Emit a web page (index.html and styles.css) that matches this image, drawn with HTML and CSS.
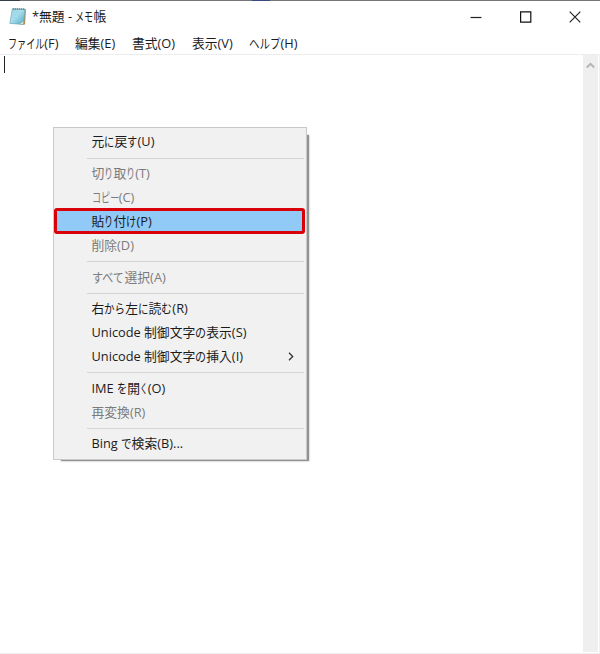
FILE: index.html
```html
<!DOCTYPE html>
<html lang="ja">
<head>
<meta charset="utf-8">
<title>無題 - メモ帳</title>
<link rel="stylesheet" href="styles.css">
</head>
<body>
<div class="window">
  <div class="backdrop"></div>
  <header class="titlebar">
    <svg class="app-icon" width="18" height="19" viewBox="0 0 18 19">
      <defs><linearGradient id="pad" x1="0" y1="0" x2="1" y2="1"><stop offset="0" stop-color="#9fd5e3"/><stop offset=".45" stop-color="#a9e0ee"/><stop offset="1" stop-color="#45a5c2"/></linearGradient></defs>
      <path d="M4.2 1.8 17 2.3 16 17.6 12 17.8z" fill="#a58d68"/>
      <path d="M3.3 1.8 16 2.2 14.3 17.4.8 16.4z" fill="url(#pad)" stroke="#77a9b5" stroke-width=".7"/>
      <path d="M4 5.2 14.8 5.7M3.6 7.8 14.5 8.3M3.2 10.4 14.2 10.9M2.8 13 13.8 13.5" stroke="#8fcddd" stroke-width=".5"/>
      <path d="M3.8 2.2H16" stroke="#5b7b80" stroke-width="1.8" stroke-dasharray="1 1"/>
      <path d="m11 17 3.4-2.7-.3 3z" fill="#e7e0bd"/>
    </svg>
    <span class="title">*無題 - <span class="k n2 s70">メモ</span>帳</span>
    <div class="controls">
      <svg width="12" height="12" viewBox="0 0 12 12"><path d="M.5 6.5h11" stroke="#222" stroke-width="1.2"/></svg>
      <svg width="12" height="12" viewBox="0 0 12 12"><path d="M.6.9h10.2v10.2H.6z" fill="none" stroke="#111" stroke-width="1.2"/></svg>
      <svg width="12" height="12" viewBox="0 0 12 12"><path d="m.7.7 10.6 10.6M11.3.7.7 11.3" stroke="#222" stroke-width="1.2"/></svg>
    </div>
  </header>
  <nav class="menubar">
    <span class="m1"><span class="k n4 s70">ファイル</span>(F)</span>
    <span class="m2">編集(E)</span>
    <span class="m3">書式(O)</span>
    <span class="m4">表示(V)</span>
    <span><span class="k n3 s80">ヘルプ</span>(H)</span>
  </nav>
  <main class="editor">
    <div class="page"><div class="caret"></div></div>
    <div class="scrollbar"><svg width="9" height="7" viewBox="0 0 9 7"><path d="m.8 5.5 3.7-3.7 3.7 3.7" fill="none" stroke="#b5b5b5" stroke-width="2"/></svg></div>
  </main>
  <div class="shadow"></div>
  <div class="context-menu">
    <div class="item">元<span class="k n1 s78">に</span>戻<span class="k n1 s78">す</span>(U)</div>
    <hr>
    <div class="item off">切<span class="k n1 s70">り</span>取<span class="k n1 s70">り</span>(T)</div>
    <div class="item off"><span class="k n3 s70">コピー</span>(C)</div>
    <div class="item active">貼<span class="k n1 s70">り</span>付<span class="k n1 s78">け</span>(P)</div>
    <div class="item off">削除(D)</div>
    <hr>
    <div class="item off"><span class="k n3 s85">すべて</span>選択(A)</div>
    <hr>
    <div class="item">右<span class="k n2 s80">から</span>左<span class="k n1 s80">に</span>読<span class="k n1 s85">む</span>(R)</div>
    <div class="item">Unicode 制御文字<span class="k n1 s85">の</span>表示(S)</div>
    <div class="item">Unicode 制御文字<span class="k n1 s85">の</span>挿入(I)<svg class="arrow" width="6" height="9" viewBox="0 0 6 9"><path d="m1 .8 3.7 3.7L1 8.2" fill="none" stroke="#333" stroke-width="1.3"/></svg></div>
    <hr>
    <div class="item">IME <span class="k n1 s78">を</span>開<span class="k n1 s60">く</span>(O)</div>
    <div class="item off">再変換(R)</div>
    <hr>
    <div class="item">Bing <span class="k n1 s80">で</span>検索(B)...</div>
  </div>
</div>
</body>
</html>
```
FILE: styles.css
```css
* { box-sizing: border-box; }
body {
  margin: 0;
  width: 600px;
  height: 654px;
  overflow: hidden;
  background: #fff;
  color: #1b1b1b;
  font: 12.8px/22px "Open Sans", "Noto Sans CJK JP", sans-serif;
  white-space: nowrap;
}
.window {
  position: relative;
  display: flex;
  flex-direction: column;
  height: 654px;
}
.backdrop {
  height: 1px;
  background: linear-gradient(90deg, #343e49 0 20px, #77777a 20px 252px, #364a80 252px 270px, #77777a 270px);
}
.titlebar {
  display: flex;
  align-items: center;
  height: 31px;
  padding: 0 19px 0 9px;
}
.app-icon { margin-right: 5px; }
.title { flex: 1; padding-bottom: 1px; }
.controls { display: flex; gap: 37.5px; }
.controls svg { display: block; }
.menubar {
  display: flex;
  height: 22px;
  padding-left: 8px;
}
.m1 { width: 67px; }
.m2 { width: 57px; }
.m3 { width: 60px; }
.m4 { width: 57px; }

/* Narrow kana, set beside full-width kanji */
.k {
  display: inline-block;
  width: calc(var(--n) * 12.8px * var(--s));
  transform: scaleX(var(--s));
  transform-origin: 0 50%;
}
.n1 { --n: 1; }
.n2 { --n: 2; }
.n3 { --n: 3; }
.n4 { --n: 4; }
.s60 { --s: .6; }
.s70 { --s: .71; }
.s78 { --s: .8; }
.s80 { --s: .82; }
.s85 { --s: .86; }

.editor {
  display: flex;
  flex: 1;
  border-top: 1px solid #ededed;
  border-right: 1px solid #f0f0f0;
  border-bottom: 1px solid #ededed;
}
.page { flex: 1; padding: 1px 0 0 4px; }
.caret { width: 1px; height: 17px; background: #222; }
.scrollbar {
  display: flex;
  justify-content: center;
  width: 15px;
  margin: 0 1px 1px 0;
  padding-top: 7px;
  background: #efefef;
}
.shadow {
  position: absolute;
  left: 61px;
  top: 135px;
  width: 248px;
  height: 326px;
  background: #929292;
  box-shadow: 0 0 2px #aaa;
}
.context-menu {
  position: absolute;
  left: 53px;
  top: 127px;
  width: 254px;
  height: 333px;
  padding: 2px 1px;
  border: 1px solid #c9c9c9;
  background: #f1f1f1;
}
.context-menu hr {
  height: 1px;
  margin: 3.6px 1px 3px 32px;
  border: 0;
  background: #d4d4d4;
}
.item {
  display: flex;
  align-items: center;
  height: 24px;
  padding: 0 0 1.4px 36.5px;
  white-space: pre;
}
.off { color: #7b7b7b; }
.active {
  height: 26px;
  margin: -1.6px 0 -.4px -1px;
  width: 251px;
  padding: 0 0 0 34.5px;
  border: 3px solid #da0007;
  border-radius: 3px;
  background: #91c9f7;
}
.arrow { margin-left: 45px; }
```
